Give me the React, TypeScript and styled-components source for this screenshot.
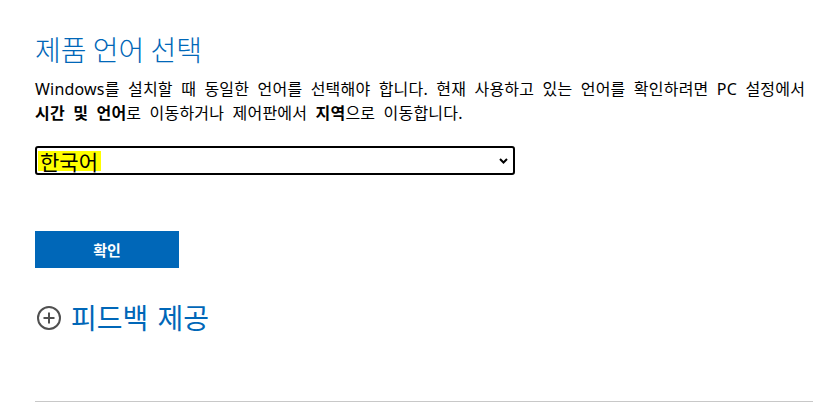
import React from "react";
import styled, { createGlobalStyle } from "styled-components";

const GlobalStyle = createGlobalStyle`
  body {
    margin: 0;
    background: #fff;
    font-family: "Noto Sans", "Noto Sans CJK KR", sans-serif;
    color: #000;
  }
`;

const Page = styled.main`
  padding: 0 23px 0 35px;
`;

const Title = styled.h1`
  margin: 0;
  padding-top: 30px;
  font-family: "Noto Sans CJK KR", sans-serif;
  font-weight: 300;
  font-size: 28px;
  line-height: 38px;
  color: #0067b8;
`;

const Intro = styled.p`
  margin: 9px 0 0;
  font-size: 16px;
  line-height: 24px;
  word-break: keep-all;
  word-spacing: 4px;
  letter-spacing: 0.2px;
`;

const SelectBox = styled.div`
  position: relative;
  box-sizing: border-box;
  width: 480px;
  height: 29px;
  margin-top: 21px;
  border: 2px solid #000;
  border-radius: 3px;
  display: flex;
  align-items: center;
  padding: 0 1px;
  cursor: default;
`;

const Highlight = styled.span`
  background: #ffff00;
  font-family: "Noto Sans CJK KR", sans-serif;
  font-size: 21px;
  line-height: 20px;
  padding: 0 3px 0 2px;
`;

const Chevron = styled.svg`
  position: absolute;
  right: 5px;
  top: 10px;
`;

const PrimaryButton = styled.button`
  display: block;
  margin-top: 56px;
  width: 144px;
  height: 37px;
  border: 0;
  background: #0067b8;
  color: #fff;
  font-family: "Noto Sans CJK KR", sans-serif;
  font-weight: 700;
  font-size: 15px;
  cursor: pointer;
`;

const Feedback = styled.a`
  display: flex;
  align-items: center;
  gap: 10px;
  margin-top: 36px;
  padding-left: 2px;
  color: #0067b8;
  text-decoration: none;
  font-family: "Noto Sans CJK KR", sans-serif;
  font-size: 28px;
  line-height: 27px;
  word-spacing: 3px;
`;

const Rule = styled.hr`
  margin: 70px 0 0;
  border: 0;
  border-top: 1px solid #c8c8c8;
`;

const App = () => {
  return (
    <>
      <GlobalStyle />
      <Page>
        <Title>제품 언어 선택</Title>
        <Intro>
          Windows를 설치할 때 동일한 언어를 선택해야 합니다. 현재 사용하고 있는 언어를 확인하려면 PC 설정에서{" "}
          <b>시간 및 언어</b>로 이동하거나 제어판에서 <b>지역</b>으로 이동합니다.
        </Intro>
        <SelectBox role="combobox">
          <Highlight>한국어</Highlight>
          <Chevron width="9" height="6" viewBox="0 0 9 6">
            <path d="M1 1l3.5 3.5L8 1" fill="none" stroke="#000" strokeWidth="2" />
          </Chevron>
        </SelectBox>
        <PrimaryButton>확인</PrimaryButton>
        <Feedback href="#">
          <svg width="24" height="24" viewBox="0 0 24 24">
            <circle cx="12" cy="12" r="11" fill="none" stroke="#505050" strokeWidth="2" />
            <path d="M12 6.5v11M6.5 12h11" stroke="#505050" strokeWidth="2" />
          </svg>
          피드백 제공
        </Feedback>
        <Rule />
      </Page>
    </>
  );
};

export default App;
